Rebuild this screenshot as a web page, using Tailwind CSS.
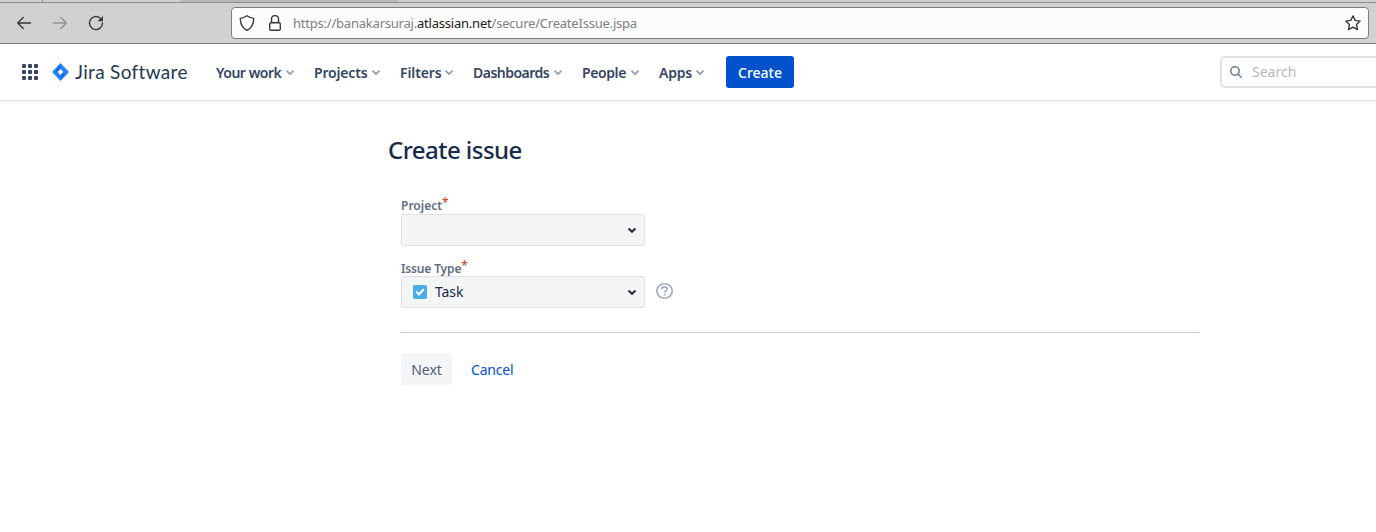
<!DOCTYPE html>
<html lang="en">
<head>
<meta charset="utf-8">
<title>Create issue</title>
<script src="https://cdn.jsdelivr.net/npm/@tailwindcss/browser@4"></script>
</head>
<body class="h-[532px] overflow-hidden bg-white font-['Noto_Sans',sans-serif] text-[#172b4d]">
<svg class="hidden"><defs>
<symbol id="chev" viewBox="0 0 8 6"><path d="M1 1.2 4 4.2 7 1.2" fill="none" stroke="currentColor" stroke-width="1.9" stroke-linecap="round" stroke-linejoin="round"/></symbol>
</defs></svg>
<!-- browser toolbar -->
<div class="flex h-[3px] border-b border-[#8c8c8c] bg-[#cfcfcf]">
  <div class="w-[43px] border-r border-[#8c8c8c]"></div><div class="w-[137px]"></div><div class="w-[219px] rounded-b-sm bg-[#b9b9b9]"></div>
</div>
<div class="flex h-[41px] items-center border-b border-[#7d7d7d] bg-[#d1d1d1] pr-[7px]">
  <svg class="ml-4 h-4 w-4" viewBox="0 0 16 16" fill="none" stroke="#373737" stroke-width="1.4" stroke-linecap="round" stroke-linejoin="round"><path d="M14.5 8H1.700M7.200 2.500 1.700 8l5.500 5.500"/></svg>
  <svg class="ml-5 h-4 w-4" viewBox="0 0 16 16" fill="none" stroke="#929292" stroke-width="1.4" stroke-linecap="round" stroke-linejoin="round"><path d="M1.500 8h12.800M8.800 2.500 14.300 8l-5.500 5.500"/></svg>
  <svg class="ml-5 h-4 w-4" viewBox="0 0 16 16" fill="none"><path d="M12.300 3.200A6.500 6.500 0 1 0 14.500 8" stroke="#373737" stroke-width="1.4" stroke-linecap="round"/><path d="M15 1v5.300H9.600z" fill="#373737"/></svg>
  <div class="ml-[127px] flex h-8 flex-1 items-center rounded-[4px] border border-[#7d7d7d] bg-[#fcfcfc] pr-[7px]">
    <svg class="ml-[7px] h-4 w-4" viewBox="0 0 16 16" fill="none" stroke="#373737" stroke-width="1.350" stroke-linejoin="round"><path d="M8 .8c1.700 1.300 4 2.300 6.700 2.500.1 5.200-1.400 9.300-6.700 12-5.300-2.700-6.800-6.800-6.700-12C4 3.100 6.300 2.100 8 .8z"/></svg>
    <svg class="ml-3 h-4 w-4" viewBox="0 0 16 16" fill="none" stroke="#373737" stroke-width="1.4"><rect x="2.700" y="7.700" width="10.600" height="7.600" rx="1.300"/><path d="M4.500 7.500V4a3.500 3.500 0 0 1 7 0v3.500"/></svg>
    <div class="ml-[10px] text-[13px] leading-none tracking-[-0.215px] whitespace-nowrap text-[#808080]">https://banakarsuraj.<span class="text-[#202020]">atlassian.net</span>/secure/CreateIssue.jspa</div>
    <svg class="ml-auto h-4 w-4" viewBox="0 0 16 16" fill="none" stroke="#373737" stroke-width="1.350" stroke-linejoin="round"><path d="m8 .9 2.150 4.500 5 .7-3.600 3.500.9 5L8 12.200l-4.450 2.400.9-5L.85 6.100l5-.7z"/></svg>
  </div>
</div>
<!-- site header -->
<header class="flex h-[57px] items-center border-b border-[#dfe1e9] pl-[22px] shadow-[0_1px_2px_#00000014]">
  <div class="grid grid-cols-3 gap-[2px]">
    <i class="size-1 rounded-[1px] bg-[#344563]"></i><i class="size-1 rounded-[1px] bg-[#344563]"></i><i class="size-1 rounded-[1px] bg-[#344563]"></i>
    <i class="size-1 rounded-[1px] bg-[#344563]"></i><i class="size-1 rounded-[1px] bg-[#344563]"></i><i class="size-1 rounded-[1px] bg-[#344563]"></i>
    <i class="size-1 rounded-[1px] bg-[#344563]"></i><i class="size-1 rounded-[1px] bg-[#344563]"></i><i class="size-1 rounded-[1px] bg-[#344563]"></i>
  </div>
  <svg class="ml-[14px] h-[18px] w-[17px]" viewBox="0 0 17 18"><path d="M8.500 0 17 9l-8.500 9L0 9z" fill="#2684ff"/><path d="M8.500 2v4.200L5.800 9 4.800 7.800c-.8-1-.7-1.900.2-2.800z" fill="#1468e5"/><path d="M8.500 16v-4.200L11.200 9l1 1.200c.8 1 .7 1.900-.2 2.800z" fill="#1468e5"/><path d="m8.500 6.100 2.700 2.900-2.700 2.900L5.800 9z" fill="#fff"/></svg>
  <div class="ml-[6px] w-[141px] font-['Lato',sans-serif] text-[19px] leading-6 tracking-[0.32px] whitespace-nowrap text-[#253858]">Jira Software</div>
  <nav class="flex items-center pt-px text-sm leading-5 font-semibold whitespace-nowrap text-[#344563]">
    <div class="flex w-[98px] items-center"><span class="w-[70px] tracking-[-0.48px]">Your work</span><svg class="h-[6px] w-2 text-[#97a0af]"><use href="#chev"/></svg></div>
    <div class="flex w-[86px] items-center"><span class="w-[58px] tracking-[-0.18px]">Projects</span><svg class="h-[6px] w-2 text-[#97a0af]"><use href="#chev"/></svg></div>
    <div class="flex w-[73px] items-center"><span class="w-[45px] tracking-[-0.1px]">Filters</span><svg class="h-[6px] w-2 text-[#97a0af]"><use href="#chev"/></svg></div>
    <div class="flex w-[109px] items-center"><span class="w-[81px] tracking-[-0.52px]">Dashboards</span><svg class="h-[6px] w-2 text-[#97a0af]"><use href="#chev"/></svg></div>
    <div class="flex w-[77px] items-center"><span class="w-[49px] tracking-[-0.4px]">People</span><svg class="h-[6px] w-2 text-[#97a0af]"><use href="#chev"/></svg></div>
    <div class="flex w-[67px] items-center"><span class="w-[37px] tracking-[-0.25px]">Apps</span><svg class="h-[6px] w-2 text-[#97a0af]"><use href="#chev"/></svg></div>
  </nav>
  <button class="h-8 w-[68px] rounded-[3px] bg-[#0052cc] pt-px text-sm font-medium text-white">Create</button>
  <div class="ml-auto flex h-8 w-[156px] items-center rounded-l-[5px] border-2 border-r-0 border-[#dfe1e6] bg-white pl-[7px]">
    <svg class="size-[14px]" viewBox="0 0 14 14" fill="none" stroke="#6b7a94" stroke-width="1.500" stroke-linecap="round"><circle cx="6" cy="6" r="4.200"/><path d="m9.200 9.200 3 3"/></svg>
    <span class="ml-[9px] text-sm text-[#b3bac5]">Search</span>
  </div>
</header>
<!-- form -->
<main class="pl-[388px]">
  <h1 class="pt-[35px] text-[24px] leading-7 font-medium tracking-[-0.54px] whitespace-nowrap">Create issue</h1>
  <form class="ml-[13px] w-[798px]">
    <div class="mt-8 flex h-[18px] text-[12px] leading-4 font-semibold text-[#5e6c84]"><span class="pt-[2px]">Project</span><span class="-mt-px font-normal text-[#de350b]">*</span></div>
    <div class="flex h-8 w-[244px] items-center rounded-[3px] border border-[#dfe1e6] bg-[#f4f5f7] pr-[7px]"><svg class="ml-auto h-[7px] w-[10px] text-[#2b2f36]" viewBox="0 0 10 7"><path d="m1.500 1.500 3.500 3.300 3.500-3.300" fill="none" stroke="currentColor" stroke-width="2.200"/></svg></div>
    <div class="mt-3 flex h-[18px] text-[12px] leading-4 font-semibold text-[#5e6c84]"><span class="pt-[3px] tracking-[-0.15px]">Issue Type</span><span class="font-normal text-[#de350b]">*</span></div>
    <div class="flex items-center">
      <div class="flex h-8 w-[244px] items-center rounded-[3px] border border-[#dfe1e6] bg-[#f4f5f7] pr-[7px] pl-[11px] text-sm">
        <svg class="size-[14px]" viewBox="0 0 14 14"><rect width="14" height="14" rx="1.800" fill="#4bade8"/><path d="m3.800 7.300 2.200 2.200 4.300-4.800" fill="none" stroke="#fff" stroke-width="2" stroke-linecap="round" stroke-linejoin="round"/></svg>
        <span class="ml-2 tracking-[-0.1px]">Task</span>
        <svg class="ml-auto h-[7px] w-[10px] text-[#2b2f36]" viewBox="0 0 10 7"><path d="m1.500 1.500 3.500 3.300 3.500-3.300" fill="none" stroke="currentColor" stroke-width="2.200"/></svg>
      </div>
      <svg class="mb-[2px] ml-[11px] h-4 w-[17px]" viewBox="0 0 16 16" preserveAspectRatio="none" fill="none" stroke="#a5adba" stroke-width="1.600"><circle cx="8" cy="8" r="7.200"/><path d="M5.500 6.300c0-1.500 1.100-2.400 2.500-2.400s2.500.9 2.500 2.200c0 1.600-2.400 1.700-2.400 3.500"/><path d="M8.100 10.700v1.800" stroke-width="1.800"/></svg>
    </div>
    <div class="mt-6 border-t border-[#cccccc]"></div>
    <div class="mt-5 flex h-8 items-center text-sm">
      <button type="button" class="h-8 w-[51px] rounded-[3px] bg-[#f4f5f7] pt-px text-[#505f79]">Next</button>
      <a class="ml-[19px] pt-[2px] tracking-[-0.2px] text-[#0052cc]">Cancel</a>
    </div>
  </form>
</main>
</body>
</html>
